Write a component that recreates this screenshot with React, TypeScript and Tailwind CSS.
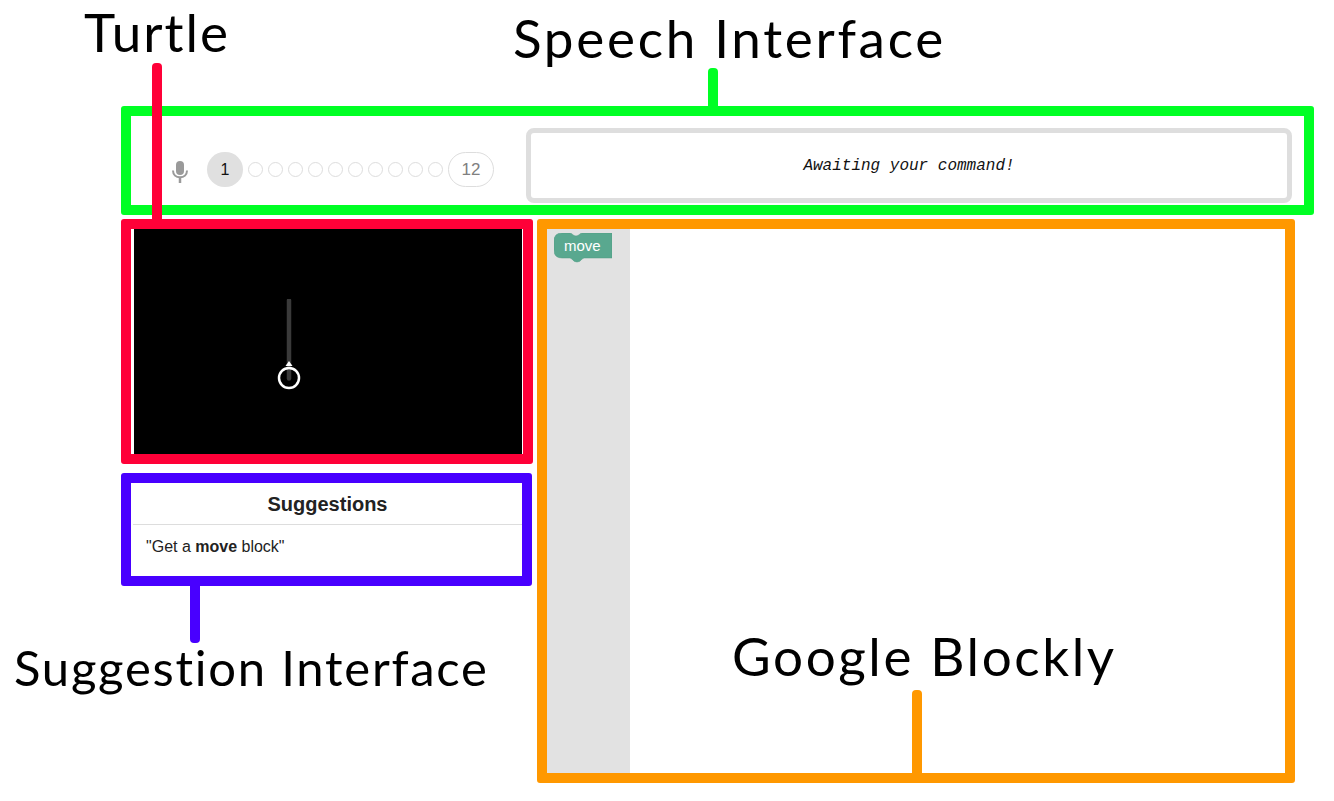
const STEPS = [2, 3, 4, 5, 6, 7, 8, 9, 10, 11];

function Mic() {
  return (
    <svg width="16" height="22" viewBox="0 0 16 22" className="text-[#9a9a9a]">
      <rect x="4" y="0" width="8" height="14" rx="4" fill="currentColor" />
      <path d="M1 9.500c0 4.200 3 6.800 7 6.800s7-2.600 7-6.800" fill="none" stroke="currentColor" strokeWidth="2" />
      <path d="M8 16v6" stroke="currentColor" strokeWidth="2.500" />
    </svg>
  );
}

function SpeechBar() {
  return (
    <div className="flex items-center h-[109px] w-[1193px] border-[10px] border-[#00ff24] rounded-[3px]">
      <div className="ml-[41px] mt-[23px]">
        <Mic />
      </div>
      <div className="flex items-center ml-[19px] mt-[18px] font-['Liberation_Sans',sans-serif]">
        <div className="flex items-center justify-center w-[36px] h-[35px] rounded-full bg-[#e0e0e0] text-[16px] text-[#111]">1</div>
        <div className="flex items-center gap-[5px] ml-[5px]">
          {STEPS.map((s) => (
            <div key={s} className="w-[15px] h-[15px] rounded-full border border-[#ddd]" />
          ))}
        </div>
        <div className="flex items-center justify-center ml-[5px] w-[46px] h-[35px] rounded-full border border-[#ddd] text-[17px] text-[#808080]">12</div>
      </div>
      <div className="flex items-center justify-center ml-[32px] w-[766px] h-[75px] mt-[10px] border-[5px] border-[#dedede] rounded-[8px] font-['Liberation_Mono',monospace] italic text-[16px] text-[#111]">
        Awaiting your command!
      </div>
    </div>
  );
}

function TurtleCanvas() {
  return (
    <div className="flex-none h-[245px] border-[10px] border-[#ff0038] rounded-[3px] bg-white pl-[3px]">
      <div className="w-[388px] h-[225px] pl-[135px] pt-[70px] bg-black">
        <svg width="40" height="100" viewBox="0 0 40 100">
          <path d="M20 1.500v78" stroke="#3a3a3a" strokeWidth="4.500" strokeLinecap="round" />
          <path d="M20 62l3.500 5h-7z" fill="#fff" />
          <circle cx="20" cy="79" r="10" fill="none" stroke="#fff" strokeWidth="2.500" />
        </svg>
      </div>
    </div>
  );
}

function Suggestions() {
  return (
    <div className="w-[411px] h-[113px] mt-[9px] border-[10px] border-[#4800ff] rounded-[3px] font-['Liberation_Sans',sans-serif] text-[#222]">
      <div className="flex items-center justify-center h-[42px] ml-[2px] border-b border-[#ddd] text-[20px] font-bold">Suggestions</div>
      <p className="mt-[13px] ml-[15px] text-[16px] leading-[18px]">
        "Get a <b>move</b> block"
      </p>
    </div>
  );
}

function MoveBlock() {
  return (
    <div className="relative w-[58px] h-[30px] pl-[10px] pt-[3px] text-white text-[15px] leading-[20px] font-['Liberation_Sans',sans-serif]">
      <svg width="58" height="30" viewBox="0 0 58 30" className="absolute left-0 top-0">
        <path
          d="M8 0H16c2 0 3 3 6 3s4-3 6-3H58V25H30c-2 0-3 4-7 4s-5-4-7-4H8Q0 25 0 17V8Q0 0 8 0z"
          fill="#59a88f"
          stroke="#4f9a82"
          strokeWidth="0.500"
        />
      </svg>
      <span className="relative">move</span>
    </div>
  );
}

function BlocklyPanel() {
  return (
    <div className="relative flex w-[758px] h-[564px] ml-[4px] border-[10px] border-[#ff9800] rounded-[3px]">
      <div className="w-[83px] bg-[#e2e2e2] pt-[4px] pl-[7px]">
        <MoveBlock />
      </div>
      <div className="flex-1 bg-white" />
      <span className="absolute left-[185px] top-[397px] font-['Lato',sans-serif] text-[53px] leading-[60px] tracking-[2.600px] text-black whitespace-nowrap">Google Blockly</span>
      <div className="absolute left-[365px] top-[461px] w-[10px] h-[83px] rounded-t-[4px] bg-[#ff9800]" />
    </div>
  );
}

export default function App() {
  return (
    <div className="relative w-[1334px] h-[801px] overflow-hidden bg-white">
      <div className="flex h-[106px] font-['Lato',sans-serif] text-black whitespace-nowrap">
        <div className="flex flex-col items-center ml-[84px] w-[146px]">
          <span className="mt-[2px] text-[53px] leading-[60px] tracking-[2px]">Turtle</span>
        </div>
        <div className="flex flex-col items-start ml-[283px] w-[432px]">
          <span className="mt-[8px] text-[53px] leading-[60px] tracking-[2.700px]">Speech Interface</span>
          <div className="w-[10px] h-[38px] ml-[195px] rounded-t-[4px] bg-[#00ff24]" />
        </div>
      </div>

      <div className="ml-[121px]">
        <SpeechBar />
        <div className="flex mt-[4px]">
          <div className="w-[412px]">
            <TurtleCanvas />
            <Suggestions />
          </div>
          <BlocklyPanel />
        </div>
      </div>

      {/* leader lines and the label that hangs off the suggestions box */}
      <div className="absolute left-[152px] top-[63px] w-[10px] h-[160px] rounded-t-[4px] bg-[#ff0038]" />
      <div className="absolute left-[190px] top-[586px] w-[10px] h-[57px] rounded-b-[4px] bg-[#4800ff]" />
      <span className="absolute left-[14px] top-[637px] font-['Lato',sans-serif] text-[49px] leading-[60px] tracking-[1.750px] text-black whitespace-nowrap">Suggestion Interface</span>
    </div>
  );
}
